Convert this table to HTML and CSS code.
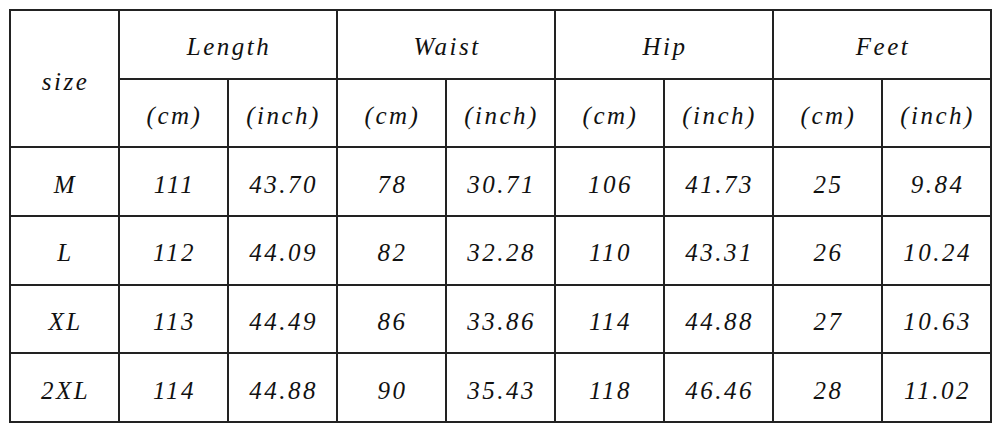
FILE: index.html
```html
<!DOCTYPE html>
<html>
<head>
<meta charset="utf-8">
<link rel="stylesheet" href="styles.css">
</head>
<body>
<table class="chart">
  <colgroup>
    <col class="c"><col class="c"><col class="c"><col class="c"><col class="c"><col class="c"><col class="c"><col class="c"><col class="c">
  </colgroup>
  <tr>
    <td rowspan="2">size</td>
    <td colspan="2">Length</td>
    <td colspan="2">Waist</td>
    <td colspan="2">Hip</td>
    <td colspan="2">Feet</td>
  </tr>
  <tr>
    <td>(cm)</td><td>(inch)</td>
    <td>(cm)</td><td>(inch)</td>
    <td>(cm)</td><td>(inch)</td>
    <td>(cm)</td><td>(inch)</td>
  </tr>
  <tr>
    <td>M</td><td>111</td><td>43.70</td><td>78</td><td>30.71</td><td>106</td><td>41.73</td><td>25</td><td>9.84</td>
  </tr>
  <tr>
    <td>L</td><td>112</td><td>44.09</td><td>82</td><td>32.28</td><td>110</td><td>43.31</td><td>26</td><td>10.24</td>
  </tr>
  <tr>
    <td>XL</td><td>113</td><td>44.49</td><td>86</td><td>33.86</td><td>114</td><td>44.88</td><td>27</td><td>10.63</td>
  </tr>
  <tr>
    <td>2XL</td><td>114</td><td>44.88</td><td>90</td><td>35.43</td><td>118</td><td>46.46</td><td>28</td><td>11.02</td>
  </tr>
</table>
</body>
</html>
```
FILE: styles.css
```css
html, body {
  margin: 0;
  padding: 0;
  background: #fff;
}
body {
  padding: 9px 0 0 9px;
}
.chart {
  border-collapse: collapse;
  table-layout: fixed;
  width: 981px;
  font-family: "Liberation Serif", "Times New Roman", serif;
  font-style: italic;
  font-size: 25px;
  letter-spacing: 2.5px;
  color: #111;
}
.chart .c {
  width: 109px;
}
.chart tr {
  height: 68.7px;
}
.chart td {
  border: 2px solid #222;
  padding: 5px 0 0 2px;
  text-align: center;
  vertical-align: middle;
  line-height: 1;
}
```
